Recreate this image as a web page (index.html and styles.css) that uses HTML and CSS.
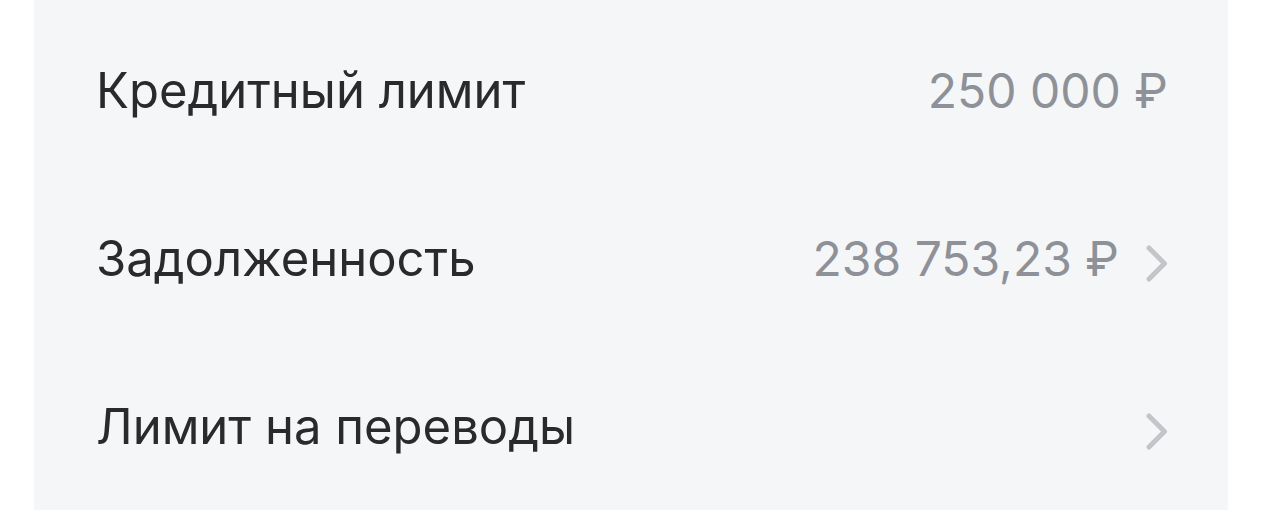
FILE: index.html
```html
<!DOCTYPE html>
<html lang="ru">
<head>
    <meta charset="UTF-8">
    <title>Кредитная карта</title>
    <link rel="stylesheet" href="styles.css">
</head>
<body>
    <div class="card">
        <div class="row">
            <span class="label">Кредитный лимит</span>
            <span class="value">250 000 ₽</span>
        </div>
        <div class="row">
            <span class="label">Задолженность</span>
            <span class="value">238 753,23 ₽</span>
            <svg class="chevron" viewBox="0 0 22 37"><path d="M3 3 L18.5 18.5 L3 34"/></svg>
        </div>
        <div class="row">
            <span class="label">Лимит на переводы</span>
            <svg class="chevron" viewBox="0 0 22 37"><path d="M3 3 L18.5 18.5 L3 34"/></svg>
        </div>
    </div>
</body>
</html>
```

FILE: styles.css
```css
body {
    margin: 0;
    background: #ffffff;
    font-family: Inter, "Noto Sans", sans-serif;
}
.card {
    margin: 0 47px 0 34px;
    height: 510px;
    background: #f5f6f8;
    padding: 6px 60px 0 62px;
    box-sizing: border-box;
}
.row {
    display: flex;
    align-items: center;
    height: 168px;
}
.label {
    flex: 1;
    font-size: 49px;
    color: #2a2a2c;
}
.value {
    font-size: 48px;
    color: #8e9198;
}
.chevron {
    width: 22px;
    height: 37px;
    margin: 10px 0 0 27px;
    fill: none;
    stroke: #c4c5c9;
    stroke-width: 5;
    stroke-linecap: round;
    stroke-linejoin: round;
}
```
